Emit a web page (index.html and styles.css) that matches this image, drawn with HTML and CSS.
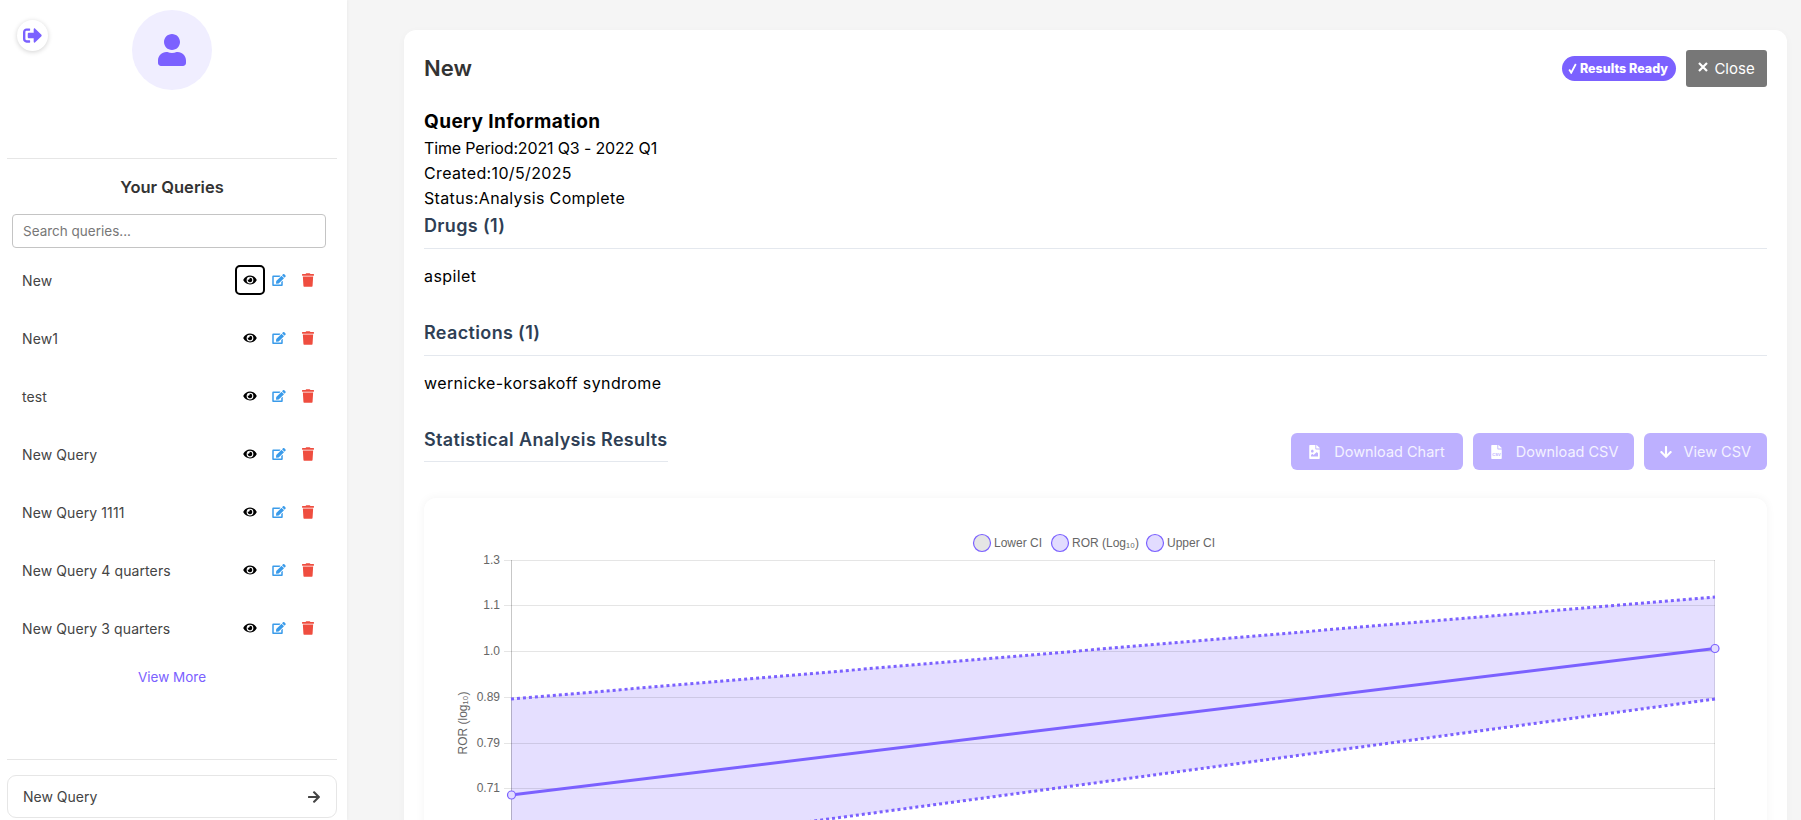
FILE: index.html
```html
<!DOCTYPE html>
<html>
  <head>
    <meta charset="utf-8">
    <title>Queries</title>
    <link rel="stylesheet" href="styles.css">
  </head>
  <body>
    <div class="app">
      <aside class="sidebar">
        <div class="profile">
          <button class="logout">
            <svg width="19" height="19" viewBox="0 0 512 512"><path d="M497 273L329 441c-15 15-41 4.500-41-17v-96H152c-13.300 0-24-10.700-24-24v-96c0-13.300 10.700-24 24-24h136V88c0-21.400 25.900-32 41-17l168 168c9.300 9.400 9.300 24.600 0 34zM192 436v-40c0-6.600-5.400-12-12-12H96c-17.700 0-32-14.300-32-32V160c0-17.700 14.300-32 32-32h84c6.600 0 12-5.400 12-12V76c0-6.600-5.400-12-12-12H96c-53 0-96 43-96 96v192c0 53 43 96 96 96h84c6.600 0 12-5.400 12-12z"/></svg>
          </button>
          <div class="avatar">
            <svg width="28" height="32" viewBox="0 0 448 512"><path d="M224 256c70.700 0 128-57.300 128-128S294.700 0 224 0 96 57.300 96 128s57.300 128 128 128zm89.600 32h-16.700c-22.200 10.200-46.900 16-72.900 16s-50.600-5.800-72.900-16h-16.700C60.200 288 0 348.200 0 422.400V464c0 26.500 21.500 48 48 48h352c26.500 0 48-21.500 48-48v-41.600c0-74.200-60.200-134.400-134.400-134.400z"/></svg>
          </div>
        </div>

        <div class="queries">
          <h3 class="queries-title">Your Queries</h3>
          <input class="search" type="text" placeholder="Search queries...">
          <ul class="query-list">
            <li class="query-row">
              <span>New</span>
              <div class="query-actions">
                <button class="icon-btn eye active"><svg width="14" height="12" viewBox="0 0 576 512"><use href="#i-eye"/></svg></button>
                <button class="icon-btn edit"><svg width="14" height="12" viewBox="0 0 576 512"><use href="#i-edit"/></svg></button>
                <button class="icon-btn trash"><svg width="12" height="14" viewBox="0 0 448 512"><use href="#i-trash"/></svg></button>
              </div>
            </li>
            <li class="query-row">
              <span>New1</span>
              <div class="query-actions">
                <button class="icon-btn eye"><svg width="14" height="12" viewBox="0 0 576 512"><use href="#i-eye"/></svg></button>
                <button class="icon-btn edit"><svg width="14" height="12" viewBox="0 0 576 512"><use href="#i-edit"/></svg></button>
                <button class="icon-btn trash"><svg width="12" height="14" viewBox="0 0 448 512"><use href="#i-trash"/></svg></button>
              </div>
            </li>
            <li class="query-row">
              <span>test</span>
              <div class="query-actions">
                <button class="icon-btn eye"><svg width="14" height="12" viewBox="0 0 576 512"><use href="#i-eye"/></svg></button>
                <button class="icon-btn edit"><svg width="14" height="12" viewBox="0 0 576 512"><use href="#i-edit"/></svg></button>
                <button class="icon-btn trash"><svg width="12" height="14" viewBox="0 0 448 512"><use href="#i-trash"/></svg></button>
              </div>
            </li>
            <li class="query-row">
              <span>New Query</span>
              <div class="query-actions">
                <button class="icon-btn eye"><svg width="14" height="12" viewBox="0 0 576 512"><use href="#i-eye"/></svg></button>
                <button class="icon-btn edit"><svg width="14" height="12" viewBox="0 0 576 512"><use href="#i-edit"/></svg></button>
                <button class="icon-btn trash"><svg width="12" height="14" viewBox="0 0 448 512"><use href="#i-trash"/></svg></button>
              </div>
            </li>
            <li class="query-row">
              <span>New Query 1111</span>
              <div class="query-actions">
                <button class="icon-btn eye"><svg width="14" height="12" viewBox="0 0 576 512"><use href="#i-eye"/></svg></button>
                <button class="icon-btn edit"><svg width="14" height="12" viewBox="0 0 576 512"><use href="#i-edit"/></svg></button>
                <button class="icon-btn trash"><svg width="12" height="14" viewBox="0 0 448 512"><use href="#i-trash"/></svg></button>
              </div>
            </li>
            <li class="query-row">
              <span>New Query 4 quarters</span>
              <div class="query-actions">
                <button class="icon-btn eye"><svg width="14" height="12" viewBox="0 0 576 512"><use href="#i-eye"/></svg></button>
                <button class="icon-btn edit"><svg width="14" height="12" viewBox="0 0 576 512"><use href="#i-edit"/></svg></button>
                <button class="icon-btn trash"><svg width="12" height="14" viewBox="0 0 448 512"><use href="#i-trash"/></svg></button>
              </div>
            </li>
            <li class="query-row">
              <span>New Query 3 quarters</span>
              <div class="query-actions">
                <button class="icon-btn eye"><svg width="14" height="12" viewBox="0 0 576 512"><use href="#i-eye"/></svg></button>
                <button class="icon-btn edit"><svg width="14" height="12" viewBox="0 0 576 512"><use href="#i-edit"/></svg></button>
                <button class="icon-btn trash"><svg width="12" height="14" viewBox="0 0 448 512"><use href="#i-trash"/></svg></button>
              </div>
            </li>
          </ul>
          <a class="view-more">View More</a>
        </div>

        <div class="sidebar-foot">
          <button class="new-query">
            <span>New Query</span>
            <svg width="12" height="14" viewBox="0 0 448 512"><path d="M190.500 66.900l22.200-22.200c9.400-9.400 24.600-9.400 33.900 0L441 239c9.400 9.400 9.400 24.600 0 33.900L246.600 467.300c-9.400 9.400-24.600 9.400-33.900 0l-22.200-22.200c-9.500-9.500-9.300-25 .4-34.300L311.400 296H24c-13.300 0-24-10.700-24-24v-32c0-13.300 10.700-24 24-24h287.400L190.900 101.200c-9.800-9.300-10-24.800-.4-34.300z"/></svg>
          </button>
        </div>
      </aside>

      <main class="main">
        <section class="card">
          <header class="card-head">
            <h2 class="card-title">New</h2>
            <div class="card-tools">
              <span class="badge">
                <svg class="badge-check" width="9" height="11" viewBox="0 0 9 11"><path d="M1.200 6.500 3.200 9.700 7.800 1"/></svg>
                Results Ready
              </span>
              <button class="close-btn">
                <svg class="close-x" width="10" height="10" viewBox="0 0 10 10"><path d="M1 1 9 9M9 1 1 9"/></svg>
                Close
              </button>
            </div>
          </header>

          <h3 class="info-title">Query Information</h3>
          <p class="info-line time">Time Period:2021 Q3 - 2022 Q1</p>
          <p class="info-line">Created:10/5/2025</p>
          <p class="info-line">Status:Analysis Complete</p>

          <h4 class="section-title">Drugs (1)</h4>
          <p class="section-text">aspilet</p>
          <h4 class="section-title">Reactions (1)</h4>
          <p class="section-text">wernicke-korsakoff syndrome</p>

          <div class="results-head">
            <h4 class="results-title">Statistical Analysis Results</h4>
            <div class="results-tools">
              <button class="dl-btn wide">
                <svg width="11" height="14" viewBox="0 0 384 512"><path d="M384 121.941V128H256V0h6.059a24 24 0 0 1 16.970 7.029l97.941 97.941a24.002 24.002 0 0 1 7.030 16.971zM248 160c-13.200 0-24-10.800-24-24V0H24C10.745 0 0 10.745 0 24v464c0 13.255 10.745 24 24 24h336c13.255 0 24-10.745 24-24V160H248zm-135.455 16c26.510 0 48 21.490 48 48s-21.490 48-48 48-48-21.490-48-48 21.491-48 48-48zm208 240h-256l.485-48.485L104.545 328c4.686-4.686 11.799-4.201 16.485.485L160.545 368 264.060 264.485c4.686-4.686 12.284-4.686 16.971 0L320.545 304v112z"/></svg>
                Download Chart
              </button>
              <button class="dl-btn">
                <svg width="11" height="14" viewBox="0 0 384 512"><path d="M384 121.941V128H256V0h6.059a24 24 0 0 1 16.970 7.029l97.941 97.941a24.002 24.002 0 0 1 7.030 16.971zM248 160c-13.200 0-24-10.800-24-24V0H24C10.745 0 0 10.745 0 24v464c0 13.255 10.745 24 24 24h336c13.255 0 24-10.745 24-24V160H248z"/><text class="file-label" x="192" y="400">CSV</text></svg>
                Download CSV
              </button>
              <button class="dl-btn view">
                <svg width="12" height="14" viewBox="0 0 448 512"><path d="M413.100 222.500l22.200 22.200c9.400 9.400 9.400 24.600 0 33.900L241 473c-9.400 9.400-24.600 9.400-33.900 0L12.700 278.600c-9.400-9.400-9.400-24.600 0-33.900l22.200-22.200c9.500-9.500 25-9.300 34.300.4L184 343.400V56c0-13.300 10.700-24 24-24h32c13.300 0 24 10.700 24 24v287.400l114.800-120.500c9.300-9.800 24.800-10 34.300-.4z"/></svg>
                View CSV
              </button>
            </div>
          </div>

          <div class="chart-card">
            <svg class="chart" width="1343" height="400" viewBox="424 497 1343 400">
              <g class="legend">
                <circle cx="982" cy="542" r="8.500" fill="#e5e5e5"/>
                <text x="994" y="546">Lower CI</text>
                <circle cx="1060" cy="542" r="8.500" fill="#e2dcff"/>
                <text x="1072" y="546">ROR (Log₁₀)</text>
                <circle cx="1155" cy="542" r="8.500" fill="#e2dcff"/>
                <text x="1167" y="546">Upper CI</text>
              </g>

              <polygon class="band" points="511,698 1715,596 1715,698 511,861"/>

              <g class="grid">
                <line x1="504" x2="1715" y1="559.500" y2="559.500"/>
                <line x1="504" x2="1715" y1="604.500" y2="604.500"/>
                <line x1="504" x2="1715" y1="650.500" y2="650.500"/>
                <line x1="504" x2="1715" y1="696.500" y2="696.500"/>
                <line x1="504" x2="1715" y1="742.500" y2="742.500"/>
                <line x1="504" x2="1715" y1="787.500" y2="787.500"/>
                <line x1="504" x2="1715" y1="833.500" y2="833.500"/>
                <line class="axis" x1="511.500" x2="511.500" y1="559" y2="900"/>
                <line x1="1714.500" x2="1714.500" y1="559" y2="900"/>
              </g>

              <g class="ticks">
                <text x="500" y="563">1.3</text>
                <text x="500" y="608">1.1</text>
                <text x="500" y="654">1.0</text>
                <text x="500" y="700">0.89</text>
                <text x="500" y="746">0.79</text>
                <text x="500" y="791">0.71</text>
              </g>
              <text class="axis-title" transform="translate(467 722) rotate(-90)">ROR (log₁₀)</text>

              <line class="ci" x1="511" y1="698" x2="1715" y2="596"/>
              <line class="ci" x1="511" y1="861" x2="1715" y2="698"/>
              <line class="ror" x1="511" y1="794" x2="1715" y2="647.500"/>
              <circle class="pt" cx="511.500" cy="794" r="4"/>
              <circle class="pt" cx="1715" cy="647.500" r="4"/>
            </svg>
          </div>
        </section>
      </main>
    </div>

    <svg class="defs" width="0" height="0">
      <defs>
        <path id="i-eye" d="M572.520 241.400C518.290 135.590 410.930 64 288 64S57.680 135.640 3.480 241.410a32.350 32.350 0 0 0 0 29.190C57.710 376.410 165.070 448 288 448s230.320-71.640 284.520-177.410a32.350 32.350 0 0 0 0-29.190zM288 400a144 144 0 1 1 144-144 143.930 143.930 0 0 1-144 144zm0-240a95.310 95.310 0 0 0-25.310 3.790 47.850 47.850 0 0 1-66.900 66.900A95.780 95.780 0 1 0 288 160z"/>
        <path id="i-edit" d="M402.600 83.200l90.200 90.200c3.800 3.800 3.800 10 0 13.800L274.400 405.600l-92.800 10.300c-12.400 1.400-22.900-9.100-21.500-21.500l10.300-92.800L388.800 83.200c3.800-3.800 10-3.800 13.800 0zm162-22.900l-48.800-48.800c-15.200-15.200-39.900-15.200-55.200 0l-35.400 35.400c-3.800 3.800-3.800 10 0 13.800l90.200 90.200c3.800 3.800 10 3.800 13.800 0l35.400-35.400c15.200-15.300 15.200-40 0-55.200zM384 346.200V448H64V128h229.800c3.200 0 6.200-1.300 8.500-3.500l40-40c7.600-7.600 2.200-20.500-8.500-20.500H48C21.500 64 0 85.500 0 112v352c0 26.500 21.500 48 48 48h352c26.500 0 48-21.500 48-48V306.200c0-10.700-12.900-16-20.500-8.500l-40 40c-2.200 2.300-3.500 5.300-3.500 8.500z"/>
        <path id="i-trash" d="M432 32H312l-9.400-18.700A24 24 0 0 0 281.100 0H166.800a23.720 23.720 0 0 0-21.400 13.300L136 32H16A16 16 0 0 0 0 48v32a16 16 0 0 0 16 16h416a16 16 0 0 0 16-16V48a16 16 0 0 0-16-16zM53.200 467a48 48 0 0 0 47.900 45h245.800a48 48 0 0 0 47.900-45L416 128H32z"/>
      </defs>
    </svg>
  </body>
</html>
```

FILE: styles.css
```css
* {
  box-sizing: border-box;
}

html,
body {
  height: 100%;
  margin: 0;
  overflow: hidden;
}

body {
  background-color: #f5f5f5;
  font-family: "Inter", "Open Sans", sans-serif;
  color: #000;
}

button {
  font-family: inherit;
  border: none;
  background: none;
  padding: 0;
}

h2,
h3,
h4,
p,
ul {
  margin: 0;
  padding: 0;
}

.app {
  display: flex;
  height: 820px;
  overflow: hidden;
}

.defs {
  position: absolute;
}

/* sidebar */
.sidebar {
  width: 347px;
  flex-shrink: 0;
  background-color: #fff;
  padding: 0 10px 0 7px;
  display: flex;
  flex-direction: column;
  box-shadow: 1px 0 3px rgba(0, 0, 0, 0.04);
}

.profile {
  position: relative;
  height: 159px;
  border-bottom: 1px solid #e6e6e6;
  display: flex;
  justify-content: center;
  padding-top: 10px;
}

.logout {
  position: absolute;
  left: 10px;
  top: 20px;
  width: 31px;
  height: 31px;
  border-radius: 50%;
  background-color: #fff;
  box-shadow: 0 1px 5px rgba(0, 0, 0, 0.18);
  display: flex;
  align-items: center;
  justify-content: center;
  fill: #7b61ff;
}

.avatar {
  width: 80px;
  height: 80px;
  border-radius: 50%;
  background-color: #f0eeff;
  display: flex;
  align-items: center;
  justify-content: center;
  fill: #7b61ff;
}

.queries {
  height: 601px;
  border-bottom: 1px solid #e6e6e6;
  padding: 0 5px;
}

.queries-title {
  margin-top: 16px;
  text-align: center;
  font-size: 16.500px;
  font-weight: 600;
  line-height: 24px;
  color: #333;
}

.search {
  display: block;
  width: 314px;
  height: 34px;
  margin-top: 15px;
  padding: 0 10px;
  border: 1px solid #c4c4c4;
  border-radius: 4px;
  font-family: inherit;
  font-size: 13.500px;
}

.search::placeholder {
  color: #777;
}

.query-list {
  list-style: none;
  margin-top: 3px;
}

.query-row {
  display: flex;
  align-items: center;
  justify-content: space-between;
  height: 58px;
  padding: 0 10px;
  font-size: 14px;
  letter-spacing: 0.1px;
  color: #444;
}

.query-actions {
  display: flex;
  align-items: center;
}

.icon-btn {
  width: 29px;
  height: 30px;
  border-radius: 5px;
  display: flex;
  align-items: center;
  justify-content: center;
}

.icon-btn.active {
  width: 30px;
  margin-right: -1px;
  border: 2px solid #000;
}

.eye {
  fill: #000;
}

.edit {
  fill: #3a9bea;
}

.trash {
  fill: #ef4d3f;
}

.view-more {
  display: block;
  margin-top: 10px;
  text-align: center;
  font-size: 13.500px;
  line-height: 20px;
  color: #7b61ff;
}

.sidebar-foot {
  padding-top: 15px;
}

.new-query {
  width: 100%;
  height: 43px;
  padding: 0 16px 0 15px;
  border: 1px solid #e6e6e6;
  border-radius: 9px;
  background-color: #fff;
  display: flex;
  align-items: center;
  justify-content: space-between;
  font-size: 14px;
  color: #444;
  fill: #444;
}

/* main card */
.main {
  flex: 1;
  min-width: 0;
  overflow: hidden;
  padding: 30px 14px 0 57px;
}

.card {
  background-color: #fff;
  border-radius: 12px;
  padding: 20px;
  box-shadow: 0 2px 8px rgba(0, 0, 0, 0.03);
}

.card-head {
  display: flex;
  align-items: flex-start;
  justify-content: space-between;
  height: 58px;
}

.card-title {
  font-size: 22px;
  font-weight: 600;
  line-height: 30px;
  margin-top: 3px;
  color: #333;
}

.card-tools {
  display: flex;
  align-items: center;
  gap: 10px;
}

.badge {
  height: 25px;
  padding: 0 8px 0 6px;
  border-radius: 13px;
  background-color: #7b61ff;
  color: #fff;
  font-size: 12.500px;
  font-weight: 800;
  white-space: nowrap;
  display: flex;
  align-items: center;
  gap: 3px;
}

.badge-check {
  fill: none;
  stroke: #fff;
  stroke-width: 1.800;
}

.close-btn {
  width: 81px;
  height: 37px;
  border-radius: 3px;
  background-color: #777;
  color: #fff;
  font-size: 15px;
  display: flex;
  align-items: center;
  justify-content: center;
  gap: 6px;
}

.close-x {
  fill: none;
  stroke: #fff;
  stroke-width: 2.200;
  margin-bottom: 3px;
}

.info-title {
  font-size: 19px;
  font-weight: 700;
  line-height: 27px;
  letter-spacing: 0.4px;
  margin-bottom: 0.500px;
}

.info-line {
  font-size: 16px;
  line-height: 25px;
  letter-spacing: 0.35px;
}

.info-line.time {
  letter-spacing: -0.15px;
}

.section-title {
  margin-top: 2px;
  font-size: 18px;
  font-weight: 600;
  line-height: 26px;
  letter-spacing: 0.35px;
  padding-bottom: 9px;
  border-bottom: 1.500px solid #e4e8ee;
  color: #2f3f55;
}

.section-text {
  font-size: 16px;
  line-height: 24px;
  letter-spacing: 0.4px;
  margin: 15px 0 32px;
}

.results-head {
  display: flex;
  align-items: flex-start;
  justify-content: space-between;
}

.results-title {
  font-size: 18px;
  font-weight: 600;
  line-height: 26px;
  letter-spacing: 0.35px;
  padding: 0 0 8px;
  border-bottom: 1.500px solid #e4e8ee;
  color: #2f3f55;
}

.results-tools {
  display: flex;
  gap: 10px;
  margin-top: 6.500px;
}

.dl-btn {
  height: 37px;
  padding: 0 16px 0 18px;
  border-radius: 6px;
  background-color: #bdb0ff;
  color: #f4f2ff;
  fill: #fff;
  font-size: 14.500px;
  display: flex;
  align-items: center;
  gap: 14px;
}

.dl-btn.wide {
  padding-right: 18px;
}

.dl-btn.view {
  padding-left: 16px;
  gap: 11px;
}

.file-label {
  font-family: "Liberation Sans", Arial, sans-serif;
  font-size: 150px;
  font-weight: 700;
  fill: #bdb0ff;
  text-anchor: middle;
}

.chart-card {
  margin-top: 28px;
  border-radius: 12px;
  background-color: #fff;
  box-shadow: 0 0 10px rgba(0, 0, 0, 0.05);
}

/* chart */
.chart {
  display: block;
  font-family: "Liberation Sans", Arial, sans-serif;
}

.legend text {
  font-size: 12px;
  fill: #666;
}

.legend circle {
  stroke: #7b61ff;
  stroke-width: 1.200;
}

.band {
  fill: #7b61ff;
  fill-opacity: 0.2;
}

.grid line {
  stroke: #000;
  stroke-opacity: 0.1;
  stroke-width: 1;
}

.grid .axis {
  stroke-opacity: 0.22;
}

.ticks text {
  font-size: 12px;
  fill: #666;
  text-anchor: end;
}

.axis-title {
  font-size: 12px;
  fill: #666;
  text-anchor: middle;
}

.ci {
  stroke: #7b61ff;
  stroke-width: 3;
  stroke-dasharray: 3 3;
}

.ror {
  stroke: #7b61ff;
  stroke-width: 3;
}

.pt {
  fill: #e2dcff;
  stroke: #7b61ff;
  stroke-width: 1.200;
}
```
